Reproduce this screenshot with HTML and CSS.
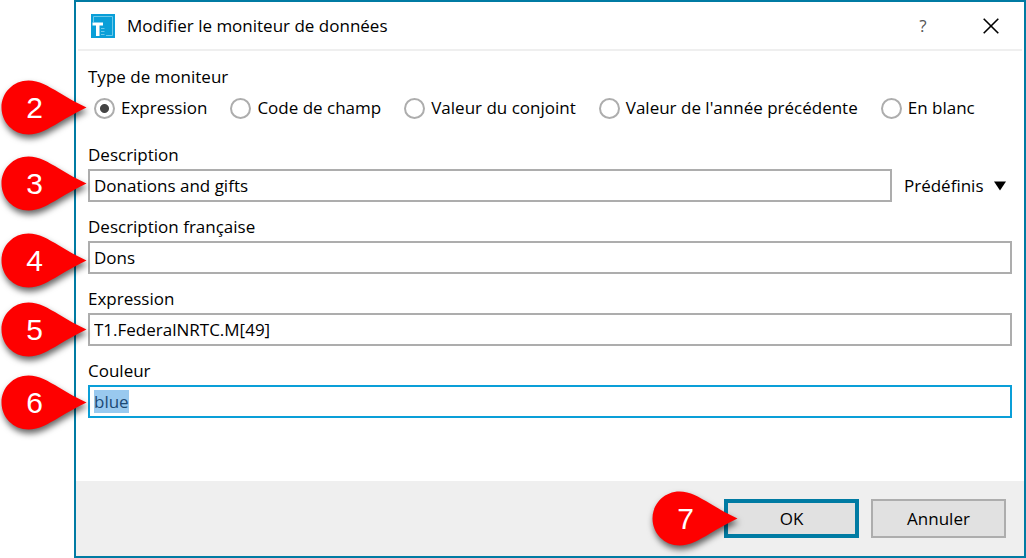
FILE: index.html
```html
<!DOCTYPE html>
<html lang="fr">
<head>
  <meta charset="UTF-8">
  <meta name="viewport" content="width=device-width, initial-scale=1.0">
  <title>Modifier le moniteur de données</title>
  <link rel="stylesheet" href="styles.css">
</head>
<body>
  <!-- teardrop shared by all the step markers -->
  <svg class="defs" width="0" height="0" aria-hidden="true">
    <symbol id="drop" viewBox="0 0 86 56">
      <path d="M0.500 27.500C0.500 12.500 12.500 0.500 27.500 0.500C38 0.500 47 6 58 12.500C67 18 76 23 85.500 27.500C76 32 67 37 58 42.500C47 49 38 54.500 27.500 54.500C12.500 54.500 0.500 42.500 0.500 27.500Z" fill="#fe0000"/>
    </symbol>
  </svg>

  <form class="dialog">
    <header class="titlebar">
      <svg class="logo" width="24" height="24" viewBox="0 0 24 24" aria-hidden="true">
        <rect width="24" height="24" fill="#0a9fd8"/>
        <path d="M2.500 8V2.500H21.500V21.500H15" fill="none" stroke="#6cc9ea"/>
        <path d="M1.500 8.500H12V11.500H8.500V22H5V11.500H1.500Z" fill="#fff"/>
        <path d="M10 14.500H13.500M10 17.500H13.500M10 20.500H13.500" stroke="#6cc9ea"/>
      </svg>
      <h1 class="title">Modifier le moniteur de données</h1>
      <button type="button" class="title-btn help" aria-label="Aide">?</button>
      <button type="button" class="title-btn" aria-label="Fermer">
        <svg width="16" height="16" viewBox="0 0 16 16"><path d="M0.700 0.700L15.300 15.300M15.300 0.700L0.700 15.300" stroke="#000" stroke-width="1.600"/></svg>
      </button>
    </header>

    <div class="content">
      <fieldset class="types">
        <legend>Type de moniteur</legend>
        <div class="radios">
          <label class="radio"><input type="radio" name="type" checked>Expression</label>
          <label class="radio"><input type="radio" name="type">Code de champ</label>
          <label class="radio"><input type="radio" name="type">Valeur du conjoint</label>
          <label class="radio"><input type="radio" name="type">Valeur de l'année précédente</label>
          <label class="radio"><input type="radio" name="type">En blanc</label>
        </div>
      </fieldset>

      <div class="field">
        <label for="desc">Description</label>
        <div class="field-row">
          <input type="text" id="desc" value="Donations and gifts">
          <div class="preset">
            <select aria-label="Prédéfinis"><option>Prédéfinis</option></select>
            <svg width="12" height="10" viewBox="0 0 12 10" aria-hidden="true"><path d="M0 0.500H12L6 9.500Z"/></svg>
          </div>
        </div>
      </div>
      <div class="field">
        <label for="desc-fr">Description française</label>
        <input type="text" id="desc-fr" value="Dons">
      </div>
      <div class="field">
        <label for="expr">Expression</label>
        <input type="text" id="expr" value="T1.FederalNRTC.M[49]">
      </div>
      <div class="field">
        <label for="color">Couleur</label>
        <input type="text" id="color" value="blue" spellcheck="false">
      </div>
    </div>

    <footer class="footer">
      <div class="ok-wrap">
        <button type="submit" class="btn btn-default">OK</button>
        <div class="pin pin-7"><svg><use href="#drop"/></svg><span>7</span></div>
      </div>
      <button type="button" class="btn">Annuler</button>
    </footer>
  </form>

  <div class="pin pin-2"><svg><use href="#drop"/></svg><span>2</span></div>
  <div class="pin pin-3"><svg><use href="#drop"/></svg><span>3</span></div>
  <div class="pin pin-4"><svg><use href="#drop"/></svg><span>4</span></div>
  <div class="pin pin-5"><svg><use href="#drop"/></svg><span>5</span></div>
  <div class="pin pin-6"><svg><use href="#drop"/></svg><span>6</span></div>

  <script src="script.js"></script>
</body>
</html>
```
FILE: styles.css
```css
* {
  box-sizing: border-box;
}

body {
  margin: 0;
  padding-left: 74px;
  position: relative;
  background: #fff;
  color: #000;
  font: 17px/24px "Open Sans", "Noto Sans", sans-serif;
}

button, input, select {
  font: inherit;
  color: inherit;
}

.defs {
  position: absolute;
}

.dialog {
  display: flex;
  flex-direction: column;
  min-height: 100vh;
  border: 2px solid #007ba3;
}

/* title bar */
.titlebar {
  display: flex;
  align-items: center;
  margin: 0 2px;
  padding: 0 9px 0 13px;
  height: 49px;
  border-bottom: 2px solid #efefef;
}

.title {
  flex: 1;
  margin: 0 0 0 12px;
  font-size: 17px;
  font-weight: 400;
}

.title-btn {
  display: flex;
  align-items: center;
  justify-content: center;
  width: 44px;
  height: 40px;
  padding: 0;
  border: 0;
  background: none;
}

.help {
  margin-right: 24px;
  color: #555;
}

/* form */
.content {
  flex: 1;
  display: flex;
  flex-direction: column;
  gap: 13px;
  padding: 14px 12px;
}

.types {
  margin: 0;
  padding: 0;
  border: 0;
}

.types legend {
  padding: 0;
}

.radios {
  display: flex;
  gap: 23px;
  padding: 7px 6px 10px;
}

.radio {
  display: flex;
  align-items: center;
  gap: 6px;
  white-space: nowrap;
}

.radio input {
  appearance: none;
  width: 21px;
  height: 21px;
  margin: 0;
  border: 2px solid #adadad;
  border-radius: 50%;
  background: #fff;
}

.radio input:checked {
  background: radial-gradient(circle, #444 4px, #fff 5px);
}

.field {
  display: flex;
  flex-direction: column;
  gap: 2px;
}

.field-row {
  display: flex;
  gap: 12px;
}

.field input {
  flex: 1;
  min-width: 0;
  height: 33px;
  padding: 0 4px;
  border: 2px solid #adadad;
  border-radius: 0;
  background: #fff;
  outline: none;
}

.field > input {
  flex: none;
}

.field input:focus {
  border-color: #0a9fd8;
}

.field input::selection {
  background: #99c9ef;
  color: #1c4a75;
}

.preset {
  display: grid;
  align-items: center;
  padding-right: 6px;
}

.preset select {
  grid-area: 1 / 1;
  appearance: none;
  padding: 0 22px 0 0;
  border: 0;
  background: none;
}

.preset svg {
  grid-area: 1 / 1;
  justify-self: end;
  pointer-events: none;
}

/* buttons */
.footer {
  display: flex;
  justify-content: flex-end;
  gap: 12px;
  padding: 18px;
  background: #efefef;
}

.ok-wrap {
  position: relative;
}

.btn {
  width: 135px;
  height: 39px;
  padding: 0;
  border: 2px solid #adadad;
  background: #e1e1e1;
}

.btn-default {
  border: 4px solid #007ba3;
}

/* step markers */
.pin {
  position: absolute;
  left: 1px;
  width: 86px;
  height: 56px;
  color: #fff;
  font: 30px/56px "Liberation Sans", Arial, sans-serif;
}

.pin svg {
  position: absolute;
  left: 0;
  top: 0;
  width: 86px;
  height: 56px;
  overflow: visible;
  filter: drop-shadow(1px 4px 3px rgba(0, 0, 0, 0.6));
}

.pin span {
  position: relative;
  display: block;
  width: 67px;
  text-align: center;
}

.pin-2 { top: 80px; }
.pin-3 { top: 156px; }
.pin-4 { top: 233px; }
.pin-5 { top: 302px; }
.pin-6 { top: 375px; }
.pin-7 { left: -72px; top: -8px; }
```
FILE: script.js
```js
const color = document.getElementById('color');
color.focus();
color.select();
```
